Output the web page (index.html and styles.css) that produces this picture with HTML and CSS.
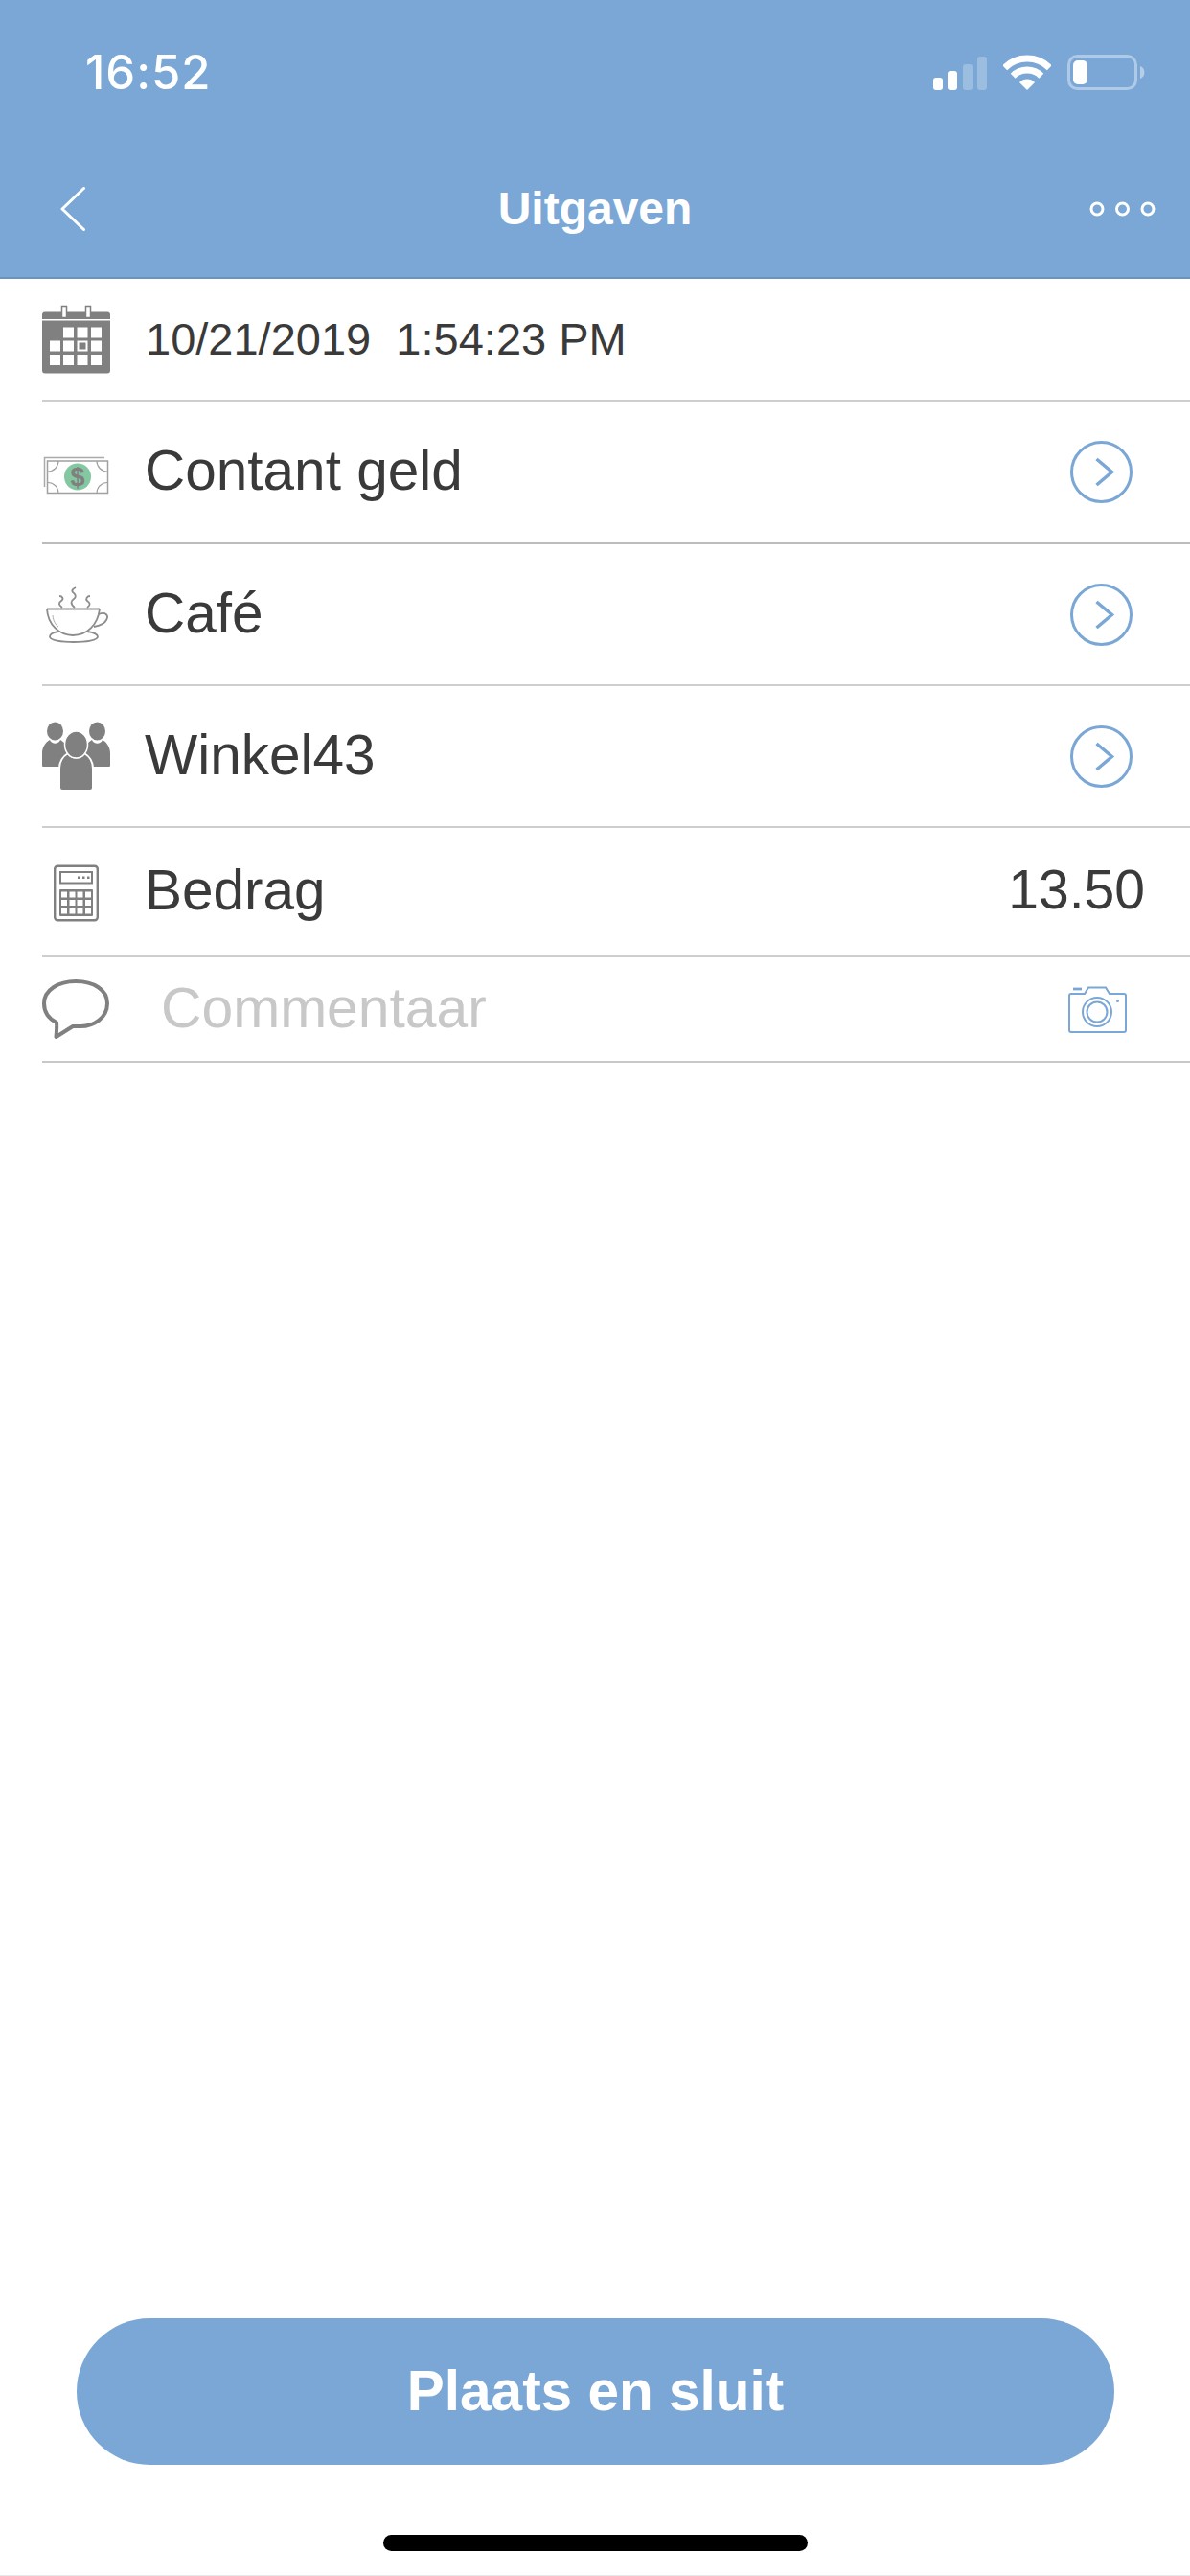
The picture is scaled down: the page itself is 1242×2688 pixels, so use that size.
FILE: index.html
```html
<!DOCTYPE html>
<html lang="nl">
<head>
<meta charset="utf-8">
<title>Uitgaven</title>
<link rel="stylesheet" href="styles.css">
</head>
<body>
<div class="screen">
  <header class="top">
    <div class="status">
      <span class="time">16:52</span>
      <div class="status-icons">
        <svg class="signal" width="56" height="35" viewBox="0 0 56 35"><rect x="0" y="22" width="10" height="13" rx="3" fill="#fff"/><rect x="15" y="15" width="10" height="20" rx="3" fill="#fff"/><rect x="31" y="8" width="10" height="27" rx="3" fill="#fff" opacity=".25"/><rect x="46" y="0" width="10" height="35" rx="3" fill="#fff" opacity=".25"/></svg>
        <svg class="wifi" width="50" height="37" viewBox="0 0 50 37"><g fill="none" stroke="#fff" stroke-width="7"><path d="M1.700 13.700A33 33 0 0 1 48.300 13.700"/><path d="M10.200 22.200A21 21 0 0 1 39.800 22.200"/></g><path d="M25 37L17 29A11 11 0 0 1 33 29Z" fill="#fff"/></svg>
        <svg class="battery" width="81" height="37" viewBox="0 0 81 37"><rect x="1.500" y="1.500" width="70" height="34" rx="9" fill="none" stroke="#fff" stroke-opacity=".4" stroke-width="3"/><rect x="6" y="6" width="15" height="25" rx="5" fill="#fff"/><path d="M76 12A7 7 0 0 1 76 25Z" fill="#fff" fill-opacity=".45"/></svg>
      </div>
    </div>
    <nav class="nav">
      <svg class="back" width="26" height="46" viewBox="0 0 26 46"><path d="M24.500 1.500L2 23L24.500 44.500" fill="none" stroke="#fff" stroke-width="3" stroke-linecap="round" stroke-linejoin="round"/></svg>
      <h1 class="title">Uitgaven</h1>
      <svg class="more" width="69" height="16" viewBox="0 0 69 16"><g fill="none" stroke="#fff" stroke-width="3"><circle cx="8" cy="8" r="6"/><circle cx="34.500" cy="8" r="6"/><circle cx="61" cy="8" r="6"/></g></svg>
    </nav>
  </header>

  <main class="list">
    <div class="row row-date">
      <svg class="icon" width="72" height="72" viewBox="0 0 72 72">
        <rect x="0" y="7.500" width="71" height="64" rx="3" fill="#808080"/>
        <rect x="0" y="15" width="71" height="1.500" fill="#fff"/>
        <rect x="20.500" y="1.500" width="5" height="12" fill="#fff" stroke="#808080" stroke-width="1.500"/>
        <rect x="45.500" y="1.500" width="5" height="12" fill="#fff" stroke="#808080" stroke-width="1.500"/>
        <g fill="#fff">
          <rect x="22" y="23.500" width="11" height="11"/><rect x="36.500" y="23.500" width="11" height="11"/><rect x="51" y="23.500" width="11" height="11"/>
          <rect x="8" y="37.500" width="11" height="11"/><rect x="22" y="37.500" width="11" height="11"/><rect x="36.500" y="37.500" width="11" height="11"/><rect x="51" y="37.500" width="11" height="11"/>
          <rect x="8" y="52" width="11" height="11"/><rect x="22" y="52" width="11" height="11"/><rect x="36.500" y="52" width="11" height="11"/><rect x="51" y="52" width="11" height="11"/>
        </g>
        <rect x="38.500" y="39.500" width="7" height="7" fill="#808080"/>
      </svg>
      <span class="date">10/21/2019  1:54:23 PM</span>
    </div>

    <div class="row row-tall row-strong">
      <svg class="icon" width="72" height="72" viewBox="0 0 72 72">
        <path d="M2.500 51V20.500H65" fill="none" stroke="#aaa" stroke-width="1.500"/>
        <rect x="5.500" y="24" width="63" height="33.500" fill="#fff" stroke="#a0a0a0" stroke-width="1.500"/>
        <g fill="none" stroke="#a0a0a0" stroke-width="1.200">
          <path d="M17 24A11 11 0 0 1 6 35"/><path d="M57 24A11 11 0 0 0 68 35"/><path d="M17 57.500A11 11 0 0 0 6 46.500"/><path d="M57 57.500A11 11 0 0 1 68 46.500"/>
        </g>
        <circle cx="37" cy="40.500" r="14" fill="#83c8a0"/>
        <text class="dollar" x="37" y="50" text-anchor="middle">$</text>
      </svg>
      <span class="label">Contant geld</span>
      <svg class="go" width="65" height="65" viewBox="0 0 65 65"><circle cx="32.500" cy="32.500" r="31" fill="none" stroke="#7aa7d5" stroke-width="3"/><path d="M27.500 19L43.500 32.500L27.500 46" fill="none" stroke="#7aa7d5" stroke-width="3.500"/></svg>
    </div>

    <div class="row row-tall row-cafe">
      <svg class="icon" width="72" height="72" viewBox="0 0 72 72">
        <g fill="none" stroke="#8c8c8c" stroke-width="1.800">
          <path d="M5 30.500H60"/>
          <path d="M5 30.500C6 47 18 58 32 58C47 58 58 47 60 30.500"/>
          <path d="M59 36C66 33 70 37 67 42C65 46 60 48 54 49"/>
          <path d="M17 54C11 55 8 57 8 59.500C8 63 20 65 33 65C46 65 58 63 58 59.500C58 57 54 55 47 54"/>
          <path d="M11 37C11.500 43 14 47 17 49" stroke-width="1" stroke="#b0b0b0"/>
          <path d="M21 29C17 26 17 24 20 22C23 20 21 17 18 17"/>
          <path d="M34 29C29 25 30 22 33 20C36 18 35 15 32 13C30 11 33 9 35 8"/>
          <path d="M47 29C51 26 50 24 47 22C45 20 47 17 50 17"/>
        </g>
      </svg>
      <span class="label">Café</span>
      <svg class="go" width="65" height="65" viewBox="0 0 65 65"><circle cx="32.500" cy="32.500" r="31" fill="none" stroke="#7aa7d5" stroke-width="3"/><path d="M27.500 19L43.500 32.500L27.500 46" fill="none" stroke="#7aa7d5" stroke-width="3.500"/></svg>
    </div>

    <div class="row row-tall">
      <svg class="icon" width="72" height="72" viewBox="0 0 72 72">
        <g fill="#808080">
          <path d="M0 46V33C0 27 3 22 8 19C10 24 17 24 19 19C24 22 27 27 27 33V47H1A1 1 0 0 1 0 46Z"/>
          <ellipse cx="13.500" cy="10" rx="8.500" ry="9.500"/>
          <path d="M71 46V33C71 27 68 22 63 19C61 24 54 24 52 19C47 22 44 27 44 33V47H70A1 1 0 0 0 71 46Z"/>
          <ellipse cx="57.500" cy="10" rx="8.500" ry="9.500"/>
        </g>
        <path d="M18 69V49C18 42 22 36 27 33C31 39 40 39 44 33C49 36 53 42 53 49V69A3 3 0 0 1 50 72H21A3 3 0 0 1 18 69Z" fill="#808080" stroke="#fff" stroke-width="2"/>
        <ellipse cx="35.500" cy="24" rx="12" ry="14" fill="#808080" stroke="#fff" stroke-width="1.500"/>
      </svg>
      <span class="label">Winkel43</span>
      <svg class="go" width="65" height="65" viewBox="0 0 65 65"><circle cx="32.500" cy="32.500" r="31" fill="none" stroke="#7aa7d5" stroke-width="3"/><path d="M27.500 19L43.500 32.500L27.500 46" fill="none" stroke="#7aa7d5" stroke-width="3.500"/></svg>
    </div>

    <div class="row row-amount">
      <svg class="icon" width="72" height="72" viewBox="0 0 72 72">
        <rect x="13.200" y="8.700" width="44.600" height="56.600" rx="3" fill="none" stroke="#808080" stroke-width="2.400"/>
        <rect x="19" y="15" width="33" height="11.500" fill="none" stroke="#808080" stroke-width="2"/>
        <g fill="#808080"><rect x="37" y="19.500" width="2.500" height="2.500"/><rect x="42" y="19.500" width="2.500" height="2.500"/><rect x="47" y="19.500" width="2.500" height="2.500"/>
          <rect x="18" y="33" width="35" height="28" rx="1"/></g>
        <g fill="#fff">
          <rect x="20" y="35.500" width="6" height="6"/><rect x="28.500" y="35.500" width="6" height="6"/><rect x="36.500" y="35.500" width="6" height="6"/><rect x="45" y="35.500" width="6" height="6"/>
          <rect x="20" y="44" width="6" height="6"/><rect x="28.500" y="44" width="6" height="6"/><rect x="36.500" y="44" width="6" height="6"/><rect x="45" y="44" width="6" height="6"/>
          <rect x="20" y="52.500" width="6" height="6"/><rect x="28.500" y="52.500" width="6" height="6"/><rect x="36.500" y="52.500" width="6" height="6"/><rect x="45" y="52.500" width="6" height="6"/>
        </g>
      </svg>
      <span class="label">Bedrag</span>
      <span class="amount">13.50</span>
    </div>

    <div class="row row-comment">
      <svg class="icon" width="72" height="72" viewBox="0 0 72 72">
        <path d="M35 7C54 7 68 16 68 30C68 45 54 54 40 54H32L14.500 65C15 60 15.500 55 15 50C7 46 2 39 2 30C2 16 17 7 35 7Z" fill="none" stroke="#808080" stroke-width="4" stroke-linejoin="round"/>
      </svg>
      <span class="label label-muted">Commentaar</span>
      <svg class="camera" width="61" height="49" viewBox="0 0 61 49" fill="none" stroke="#7aa7d5"><path d="M3 8H17L21 1.500H39L43 8H58A2 2 0 0 1 60 10V46A2 2 0 0 1 58 48H3A2 2 0 0 1 1 46V10A2 2 0 0 1 3 8Z" stroke-width="2"/><circle cx="30" cy="27" r="15" stroke-width="2"/><circle cx="30" cy="27" r="10.500" stroke-width="2"/><path d="M5 3H14" stroke-width="2.800"/><circle cx="51.500" cy="15.500" r="1.500" fill="#7aa7d5" stroke="none"/></svg>
    </div>
  </main>

  <footer class="bottom">
    <button class="submit" type="button">Plaats en sluit</button>
    <div class="home-bar"></div>
  </footer>
</div>
</body>
</html>
```

FILE: styles.css
```css
* {
  box-sizing: border-box;
}

html,
body {
  margin: 0;
  padding: 0;
  background: #fff;
}

.screen {
  width: 1242px;
  height: 2688px;
  display: flex;
  flex-direction: column;
  font-family: "Liberation Sans", Arial, sans-serif;
  color: #3a3a3a;
  overflow: hidden;
}

.top {
  background: #7aa7d5;
  border-bottom: 2px solid #6a93c0;
  color: #fff;
}

.status {
  height: 146px;
  padding: 4px 47px 0 89px;
  display: flex;
  align-items: center;
  justify-content: space-between;
}

.time {
  font-family: Inter, "Liberation Sans", sans-serif;
  font-weight: 500;
  font-size: 49px;
  letter-spacing: 1px;
}

.status-icons {
  display: flex;
  align-items: flex-end;
  gap: 17px;
}

.nav {
  height: 143px;
  padding: 0 36px;
  display: grid;
  grid-template-columns: 1fr auto 1fr;
  align-items: center;
}

.back {
  margin-left: 27px;
}

.more {
  justify-self: end;
}

.title {
  margin: 0;
  font-size: 48px;
  font-weight: 700;
}

.row {
  margin-left: 44px;
  display: flex;
  align-items: center;
  border-bottom: 2px solid #cecece;
}

.row-date {
  height: 128px;
}

.row-tall {
  height: 148px;
}

.row-strong {
  height: 149px;
  border-bottom-color: #bcbcbc;
}

.row-amount {
  height: 135px;
}

.row-comment {
  height: 110px;
  border-bottom-color: #c8c8c8;
}

.icon {
  flex: none;
  margin-right: 35px;
}

.date {
  margin-left: 1px;
  font-size: 47px;
  white-space: pre;
  padding-bottom: 2px;
}

.label {
  flex: 1;
  font-size: 58.500px;
  padding-bottom: 4px;
}

.label-muted {
  margin-left: 17px;
  font-size: 58.800px;
  color: #c8c8c8;
  padding-bottom: 4px;
}

.go {
  flex: none;
  margin-right: 60px;
}

.amount {
  flex: none;
  margin-right: 47px;
  font-size: 57px;
  padding-bottom: 6px;
}

.camera {
  flex: none;
  margin-right: 66px;
}

.dollar {
  font-family: "Liberation Sans", Arial, sans-serif;
  font-size: 27px;
  font-weight: 700;
  fill: #808080;
}

.bottom {
  margin-top: auto;
  padding: 0 79px 25px 80px;
  border-bottom: 1px solid #e8e8e8;
  display: flex;
  flex-direction: column;
  align-items: center;
}

.submit {
  width: 100%;
  height: 153px;
  border: 0;
  border-radius: 77px;
  background: #7aa7d5;
  color: #fff;
  font-family: "Liberation Sans", Arial, sans-serif;
  font-size: 58.500px;
  font-weight: 700;
  padding: 0 0 2px;
}

.home-bar {
  width: 443px;
  height: 17px;
  margin-top: 73px;
  border-radius: 9px;
  background: #000;
}
```
